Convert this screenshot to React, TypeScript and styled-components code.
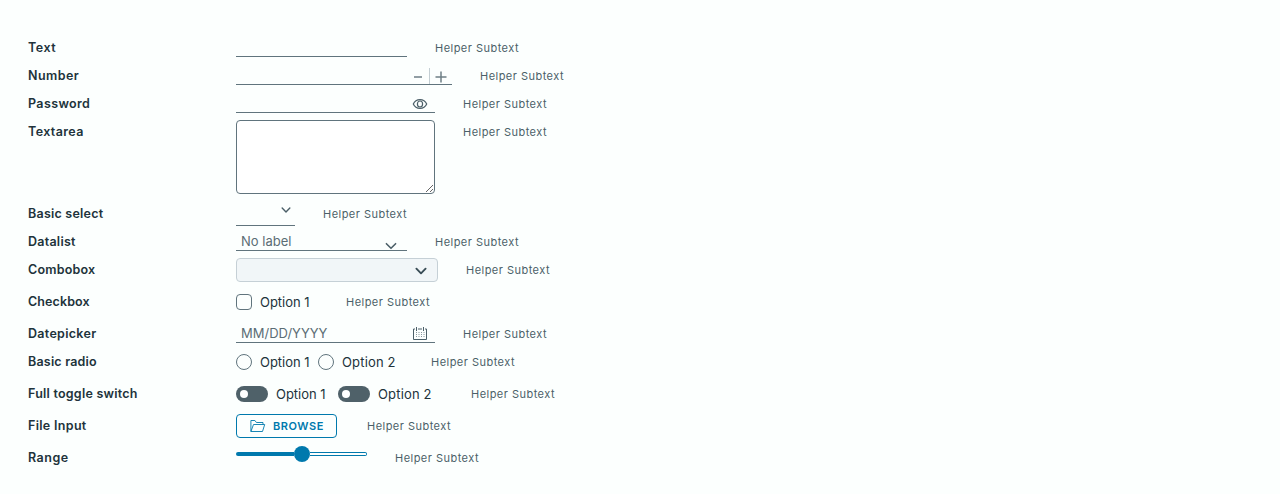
import React from 'react';
import styled, { createGlobalStyle } from 'styled-components';

const GlobalStyle = createGlobalStyle`
  * { box-sizing: border-box; }
  body {
    margin: 0;
    background: #fcfffe;
    color: #21333b;
    font-family: Inter, "Liberation Sans", sans-serif;
    font-size: 13px;
  }
`;

const Form = styled.form`
  padding: 36px 28px 0;
`;

const Row = styled.div<{ $height: number }>`
  display: flex;
  align-items: flex-start;
  height: ${(p) => p.$height}px;
`;

const Label = styled.label<{ $spacing: number }>`
  width: 208px;
  font-size: 12.5px;
  font-weight: 600;
  line-height: 24px;
  letter-spacing: ${(p) => p.$spacing}px;
  white-space: nowrap;
`;

const Control = styled.div<{ $width: number }>`
  display: flex;
  align-items: flex-start;
  flex: none;
  width: ${(p) => p.$width}px;
  margin-right: 28px;
`;

const Helper = styled.span`
  color: #4b5f68;
  font-size: 11px;
  line-height: 24px;
  letter-spacing: 0.47px;
  white-space: nowrap;
`;

const Field = styled.div<{ $height?: number; $right?: number }>`
  display: flex;
  align-items: flex-start;
  width: 100%;
  height: ${(p) => p.$height ?? 21}px;
  padding-right: ${(p) => p.$right ?? 0}px;
  border-bottom: 1px solid #60747d;
  color: #4b5f68;
`;

const Input = styled.input`
  flex: 1;
  min-width: 0;
  height: 20px;
  padding: 2px 0 0 5px;
  border: 0;
  outline: 0;
  background: transparent;
  color: #21333b;
  font: 400 13px/18px Inter, "Liberation Sans", sans-serif;
  &::placeholder { color: #5b6d75; opacity: 1; }
`;

const Icon = styled.svg<{ $top?: number }>`
  display: block;
  flex: none;
  margin-top: ${(p) => p.$top ?? 0}px;
  fill: none;
  stroke: currentColor;
`;

const StepDivider = styled.span`
  width: 1px;
  height: 16px;
  margin: 4px 5px 0;
  background: #c3ced3;
`;

const TextArea = styled.textarea`
  display: block;
  width: 199px;
  height: 74px;
  border: 1px solid #60747d;
  border-radius: 4px;
  background: #fff;
  outline: 0;
`;

const Combo = styled.div`
  display: flex;
  justify-content: flex-end;
  width: 100%;
  height: 24px;
  padding-right: 10px;
  border: 1px solid #c5d0d6;
  border-radius: 4px;
  background: #f1f6f8;
  color: #394d56;
`;

const Option = styled.label<{ $width: number; $spacing?: number }>`
  display: flex;
  align-items: center;
  gap: 8px;
  flex: none;
  width: ${(p) => p.$width}px;
  height: 24px;
  line-height: 24px;
  white-space: nowrap;
  letter-spacing: ${(p) => p.$spacing ?? -0.03}px;
`;

const Box = styled.span<{ $round?: boolean }>`
  flex: none;
  width: 16px;
  height: 16px;
  border: 1px solid #60747d;
  border-radius: ${(p) => (p.$round ? '50%' : '4px')};
`;

const Toggle = styled.span`
  display: flex;
  align-items: center;
  flex: none;
  width: 32px;
  height: 16px;
  padding-left: 4px;
  border-radius: 8px;
  background: #4f6169;
  &::before {
    content: '';
    width: 8px;
    height: 8px;
    border-radius: 50%;
    background: #fff;
  }
`;

const Browse = styled.button`
  display: flex;
  align-items: center;
  gap: 7px;
  width: 101px;
  height: 24px;
  padding: 0 0 0 13px;
  border: 1px solid #0079ad;
  border-radius: 4px;
  background: transparent;
  color: #0079ad;
  font: 600 11px/22px Inter, "Liberation Sans", sans-serif;
  letter-spacing: 0.55px;
`;

const Slider = styled.div`
  display: flex;
  align-items: center;
  width: 131px;
  height: 16px;
`;

const Filled = styled.span`
  width: 58px;
  height: 4px;
  border-radius: 2px 0 0 2px;
  background: #0079ad;
`;

const Thumb = styled.span`
  width: 16px;
  height: 16px;
  border-radius: 50%;
  background: #0079ad;
`;

const Remaining = styled.span`
  flex: 1;
  height: 4px;
  border: 1px solid #0079ad;
  border-left: 0;
  border-radius: 0 2px 2px 0;
`;

const Chevron = ({ top, size = 12, weight = 1.6 }: { top: number; size?: number; weight?: number }) => (
  <Icon $top={top} width={size} height={size} viewBox="0 0 12 12" strokeWidth={weight} strokeLinecap="round" strokeLinejoin="round">
    <path d="M1.4 3.7 6 8.3l4.6-4.6" />
  </Icon>
);

const Eye = () => (
  <Icon $top={4} width="16" height="16" viewBox="0 0 16 16" strokeWidth="1.2">
    <path d="M1.3 8C2.6 5.1 5 3.6 8 3.6s5.4 1.5 6.7 4.4C13.4 10.9 11 12.4 8 12.4S2.6 10.9 1.3 8Z" />
    <ellipse cx="8" cy="8" rx="2.6" ry="3" />
  </Icon>
);

const Calendar = () => (
  <Icon $top={4} width="16" height="16" viewBox="0 0 16 16">
    <path d="M3 3H1.5v10.5h13V3H13M6 3h4" strokeWidth="1" />
    <path d="M4.5 1v4M11.5 1v4" strokeWidth="1" />
    <path d="M4 6.5h9M4 8.5h9M4 10.5h9" strokeWidth="1" strokeDasharray="1 1.5" opacity=".65" />
  </Icon>
);

const Folder = () => (
  <Icon width="16" height="16" viewBox="0 0 16 16" strokeWidth="0.9" strokeLinejoin="round">
    <path d="M.9 13.5v-11h4l1.5 2h6.6v2M.9 13.5l2.6-7h11.2l-2.2 7Z" />
  </Icon>
);

interface FormRowProps {
  label: string;
  height?: number;
  width: number;
  spacing?: number;
  children: React.ReactNode;
}

const FormRow = ({ label, height = 28, width, spacing = 0.23, children }: FormRowProps) => (
  <Row $height={height}>
    <Label $spacing={spacing}>{label}</Label>
    <Control $width={width}>{children}</Control>
    <Helper>Helper Subtext</Helper>
  </Row>
);

export default function App() {
  return (
    <>
      <GlobalStyle />
      <Form onSubmit={(e) => e.preventDefault()}>
        <FormRow label="Text" width={171} spacing={0.5}>
          <Field><Input /></Field>
        </FormRow>
        <FormRow label="Number" width={216} spacing={0.45}>
          <Field $right={5}>
            <Input />
            <Icon $top={7} width="12" height="12" strokeWidth="1.5" opacity=".8"><path d="M2 6h8" /></Icon>
            <StepDivider />
            <Icon $top={7} width="12" height="12" strokeWidth="1.5" opacity=".8"><path d="M.5 6h11M6 .5v11" /></Icon>
          </Field>
        </FormRow>
        <FormRow label="Password" width={199} spacing={0.38}>
          <Field $right={7}><Input type="password" /><Eye /></Field>
        </FormRow>
        <FormRow label="Textarea" height={82} width={199} spacing={0.38}>
          <TextArea />
        </FormRow>
        <FormRow label="Basic select" width={59} spacing={0.23}>
          <Field $height={24} $right={4}><Input /><Chevron top={3} size={10} weight={1.7} /></Field>
        </FormRow>
        <FormRow label="Datalist" width={171} spacing={0.25}>
          <Field $right={10}><Input placeholder="No label" /><Chevron top={10} /></Field>
        </FormRow>
        <FormRow label="Combobox" height={32} width={202} spacing={0.2}>
          <Combo><Chevron top={6} weight={1.9} /></Combo>
        </FormRow>
        <FormRow label="Checkbox" height={32} width={82} spacing={0.1}>
          <Option $width={82}><Box />Option 1</Option>
        </FormRow>
        <FormRow label="Datepicker" width={199} spacing={0.3}>
          <Field $right={7}><Input placeholder="MM/DD/YYYY" /><Calendar /></Field>
        </FormRow>
        <FormRow label="Basic radio" height={32} width={167} spacing={0.2}>
          <Option $width={82}><Box $round />Option 1</Option>
          <Option $width={85} $spacing={0.17}><Box $round />Option 2</Option>
        </FormRow>
        <FormRow label="Full toggle switch" height={32} width={207}>
          <Option $width={102}><Toggle />Option 1</Option>
          <Option $width={105} $spacing={0.17}><Toggle />Option 2</Option>
        </FormRow>
        <FormRow label="File Input" height={32} width={103} spacing={0.32}>
          <Browse type="button"><Folder />BROWSE</Browse>
        </FormRow>
        <FormRow label="Range" width={131} spacing={0.5}>
          <Slider><Filled /><Thumb /><Remaining /></Slider>
        </FormRow>
      </Form>
    </>
  );
}
